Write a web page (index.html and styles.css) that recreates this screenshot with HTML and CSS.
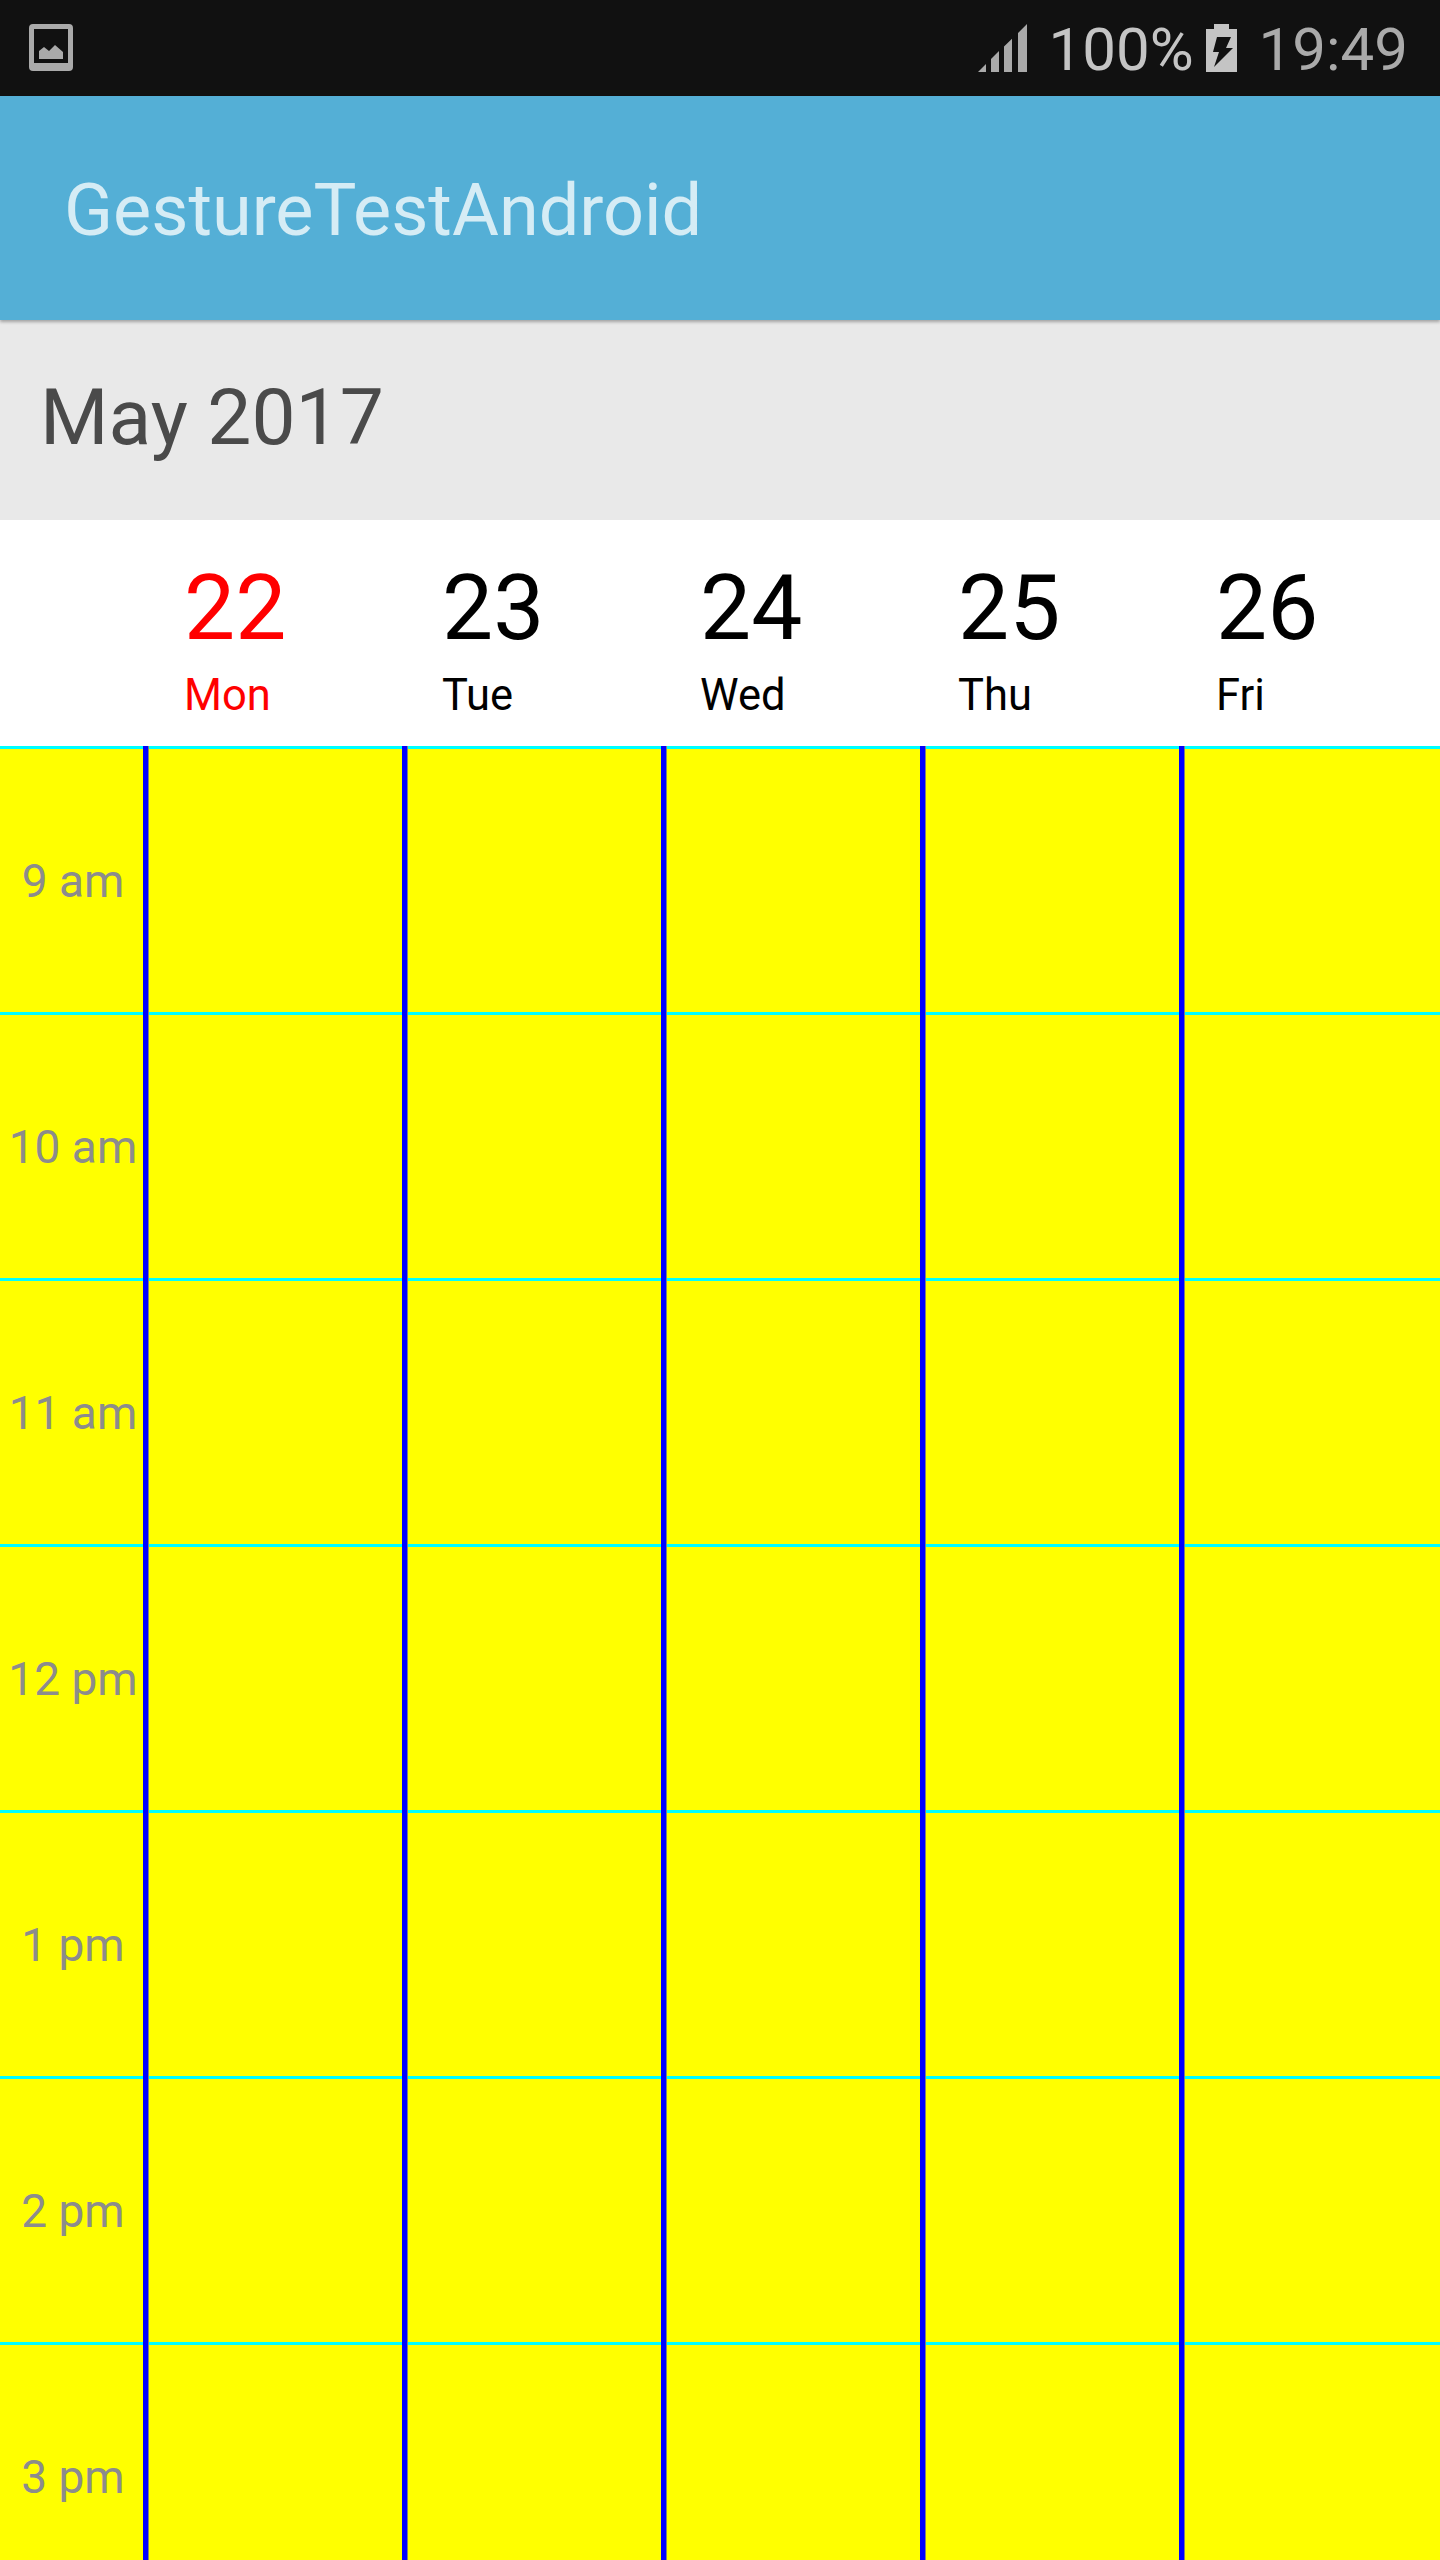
FILE: index.html
```html
<!DOCTYPE html>
<html lang="en">
<head>
  <meta charset="UTF-8" />
  <title>GestureTestAndroid</title>
  <link rel="stylesheet" href="styles.css">
</head>
<body>
  <div class="status-bar">
    <svg class="icon-picture" width="44" height="47" viewBox="0 0 44 47">
      <path fill="#aaa" fill-rule="evenodd" d="M4 0h36a4 4 0 0 1 4 4v39a4 4 0 0 1-4 4H4a4 4 0 0 1-4-4V4a4 4 0 0 1 4-4zM5 5v34h34V5z"/>
      <path fill="#aaa" d="M10 35V27l5-4 5 4 6-6 8 7v7z"/>
    </svg>
    <div class="status-right">
      <svg class="icon-signal" width="49" height="48" viewBox="0 0 49 48">
        <path fill="#aaa" d="M0 48l8-8v8zM13 48V35l8-8v21zM26 48V22.5l8-7.8V48zM40 48V9l9-9v48z"/>
      </svg>
      <span class="status-pct">100%</span>
      <svg class="icon-battery" width="32" height="48" viewBox="0 0 32 48">
        <path fill="#c4c4c4" fill-rule="evenodd" d="M8 0h15v5h8v43H0V5h8zM11 13L7 28h6L8 43l19-19h-7l5-11z"/>
      </svg>
      <span class="status-time">19:49</span>
    </div>
  </div>

  <header class="app-bar">GestureTestAndroid</header>

  <div class="month-bar">May 2017</div>

  <div class="day-header">
    <div class="day today"><div class="day-num">22</div><div class="day-name">Mon</div></div>
    <div class="day"><div class="day-num">23</div><div class="day-name">Tue</div></div>
    <div class="day"><div class="day-num">24</div><div class="day-name">Wed</div></div>
    <div class="day"><div class="day-num">25</div><div class="day-name">Thu</div></div>
    <div class="day"><div class="day-num">26</div><div class="day-name">Fri</div></div>
  </div>

  <div class="week-grid">
    <div class="row"><div class="hour">9 am</div><div class="cell"></div><div class="cell"></div><div class="cell"></div><div class="cell"></div><div class="cell"></div></div>
    <div class="row"><div class="hour">10 am</div><div class="cell"></div><div class="cell"></div><div class="cell"></div><div class="cell"></div><div class="cell"></div></div>
    <div class="row"><div class="hour">11 am</div><div class="cell"></div><div class="cell"></div><div class="cell"></div><div class="cell"></div><div class="cell"></div></div>
    <div class="row"><div class="hour">12 pm</div><div class="cell"></div><div class="cell"></div><div class="cell"></div><div class="cell"></div><div class="cell"></div></div>
    <div class="row"><div class="hour">1 pm</div><div class="cell"></div><div class="cell"></div><div class="cell"></div><div class="cell"></div><div class="cell"></div></div>
    <div class="row"><div class="hour">2 pm</div><div class="cell"></div><div class="cell"></div><div class="cell"></div><div class="cell"></div><div class="cell"></div></div>
    <div class="row"><div class="hour">3 pm</div><div class="cell"></div><div class="cell"></div><div class="cell"></div><div class="cell"></div><div class="cell"></div></div>
  </div>
</body>
</html>
```

FILE: styles.css
```css
* { box-sizing: border-box; }
html, body { margin: 0; padding: 0; }
body { width: 1440px; height: 2560px; overflow: hidden; background: #ff0; font-family: Roboto, sans-serif; }

.status-bar { height: 96px; background: #111; display: flex; justify-content: space-between; padding: 24px 32px 0 29px; }
.icon-picture { display: block; }
.status-right { display: flex; align-items: flex-start; font-size: 60px; line-height: 48px; }
.icon-signal { margin-right: 21px; }
.status-pct { color: #c4c4c4; margin-top: 2px; }
.icon-battery { margin: 0 21px 0 12px; }
.status-time { color: #aaa; margin-top: 2px; }

.app-bar { height: 224px; background: #54afd6; color: #d5ecf5; font-size: 72px; line-height: 224px; padding: 3px 0 0 64px; position: relative; box-shadow: 0 2px 3px rgba(0,0,0,.3); }

.month-bar { height: 200px; background: #e9e9e9; color: #4a4a4a; font-size: 78.5px; line-height: 194px; padding-left: 40px; }

.day-header { height: 226px; background: #fff; display: grid; grid-template-columns: 143px repeat(5, 258px); padding-top: 42px; }
.day { color: #000; padding-left: 41px; }
.day.today { grid-column: 2; color: #f00; }
.day-num { font-size: 91px; line-height: 92px; }
.day-name { font-size: 43.5px; line-height: 48px; margin-top: 18px; }

.row { height: 266px; display: grid; grid-template-columns: 143px repeat(5, 259px); background: linear-gradient(#0ff 3px, transparent 3px); }
.hour { color: #8c8c8c; font-size: 46px; text-align: center; padding: 109px 0 0 3px; line-height: 52px; white-space: nowrap; }
.cell { border-left: 5px solid #00f; box-shadow: inset 1px 0 0 #808080; }
```
